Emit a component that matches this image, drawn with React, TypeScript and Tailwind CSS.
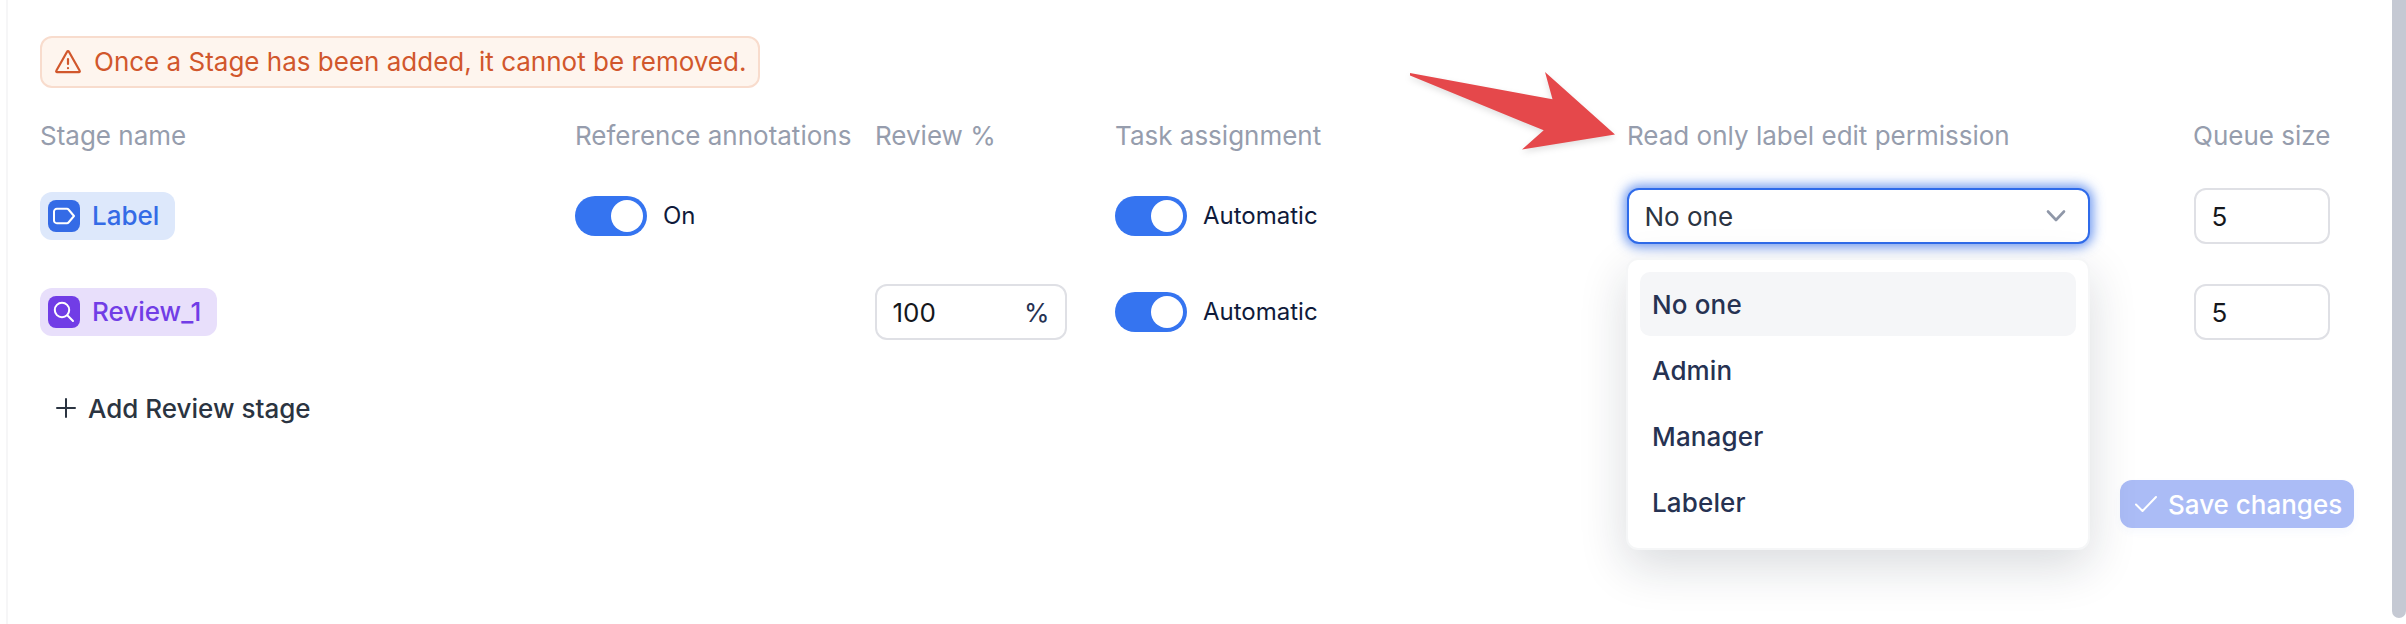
import React from "react";

const input =
  "flex h-14 items-center rounded-xl border-2 border-[#dfe0e5] bg-white px-[15.5px] text-[26px] text-[#15171c]";

function Toggle({ label }: { label: string }) {
  return (
    <div className="flex items-center">
      <span className="flex h-10 w-[72px] items-center justify-end rounded-full bg-[#3574f0] p-1">
        <span className="size-8 rounded-full bg-white" />
      </span>
      <span className="ml-4 text-2xl text-[#0f1a3a]">{label}</span>
    </div>
  );
}

function WarningIcon() {
  return (
    <svg width="28" height="26" viewBox="0 0 28 26" fill="none" stroke="#d1572c" strokeWidth="2.200" strokeLinecap="round" strokeLinejoin="round">
      <path d="M13.200 2.500 2.300 21.800a.9.9 0 0 0 .8 1.400h21.800a.9.9 0 0 0 .8-1.400L14.800 2.500a.9.9 0 0 0-1.600 0Z" />
      <path d="M14 10v5M14 19v.2" />
    </svg>
  );
}

function LabelIcon() {
  return (
    <svg width="32" height="32" viewBox="0 0 32 32" fill="none" stroke="#fff" strokeWidth="2" strokeLinejoin="round">
      <path d="M8.800 8.800h10.200a2 2 0 0 1 1.500.7l5.500 6.500-5.500 6.500a2 2 0 0 1-1.500.7H8.800a2.800 2.800 0 0 1-2.800-2.800v-8.800a2.800 2.800 0 0 1 2.800-2.800Z" />
    </svg>
  );
}

function SearchIcon() {
  return (
    <svg width="32" height="32" viewBox="0 0 32 32" fill="none" stroke="#fff" strokeWidth="2" strokeLinecap="round">
      <circle cx="14" cy="14" r="7.2" />
      <path d="m19.300 19.300 5.700 5.700" />
    </svg>
  );
}

const options = ["No one", "Admin", "Manager", "Labeler"];

export default function App() {
  return (
    <div className="flex h-[624px] w-[2406px] overflow-hidden bg-white font-['Inter',sans-serif] text-[26px] leading-8">
      <div className="ml-1.5 w-0.5 shrink-0 bg-[#f6f6f7]" />
      <main className="w-[2384px] shrink-0 pl-8 pt-9">
        <div className="flex h-[52px] w-[720px] items-center rounded-xl border-2 border-[#f8dccd] bg-[#fef5ee] pl-3 text-[#d1572c]">
          <WarningIcon />
          <span className="ml-3 whitespace-nowrap">Once a Stage has been added, it cannot be removed.</span>
        </div>

        <div className="mt-8 grid h-8 grid-cols-[535px_300px_240px_512px_566px_auto] whitespace-nowrap text-[#969dad]">
          <span>Stage name</span>
          <span>Reference annotations</span>
          <span>Review %</span>
          <span>Task assignment</span>
          <span>Read only label edit permission</span>
          <span>Queue size</span>
        </div>

        <div className="mt-9 grid h-14 grid-cols-[535px_300px_240px_512px_567px_auto] items-center">
          <div>
            <span className="flex h-12 w-[135px] items-center rounded-xl bg-[#dde8fb] pl-2 font-medium text-[#346be6]">
              <span className="rounded-lg bg-[#346be6]"><LabelIcon /></span>
              <span className="ml-3">Label</span>
            </span>
          </div>
          <Toggle label="On" />
          <span />
          <Toggle label="Automatic" />
          <div className="relative w-[463px]">
            <div className="flex h-14 items-center justify-between rounded-xl border-2 border-[#2f6bea] bg-white pl-[15.5px] pr-[21px] text-[#2b3441] shadow-[0_0_12px_3px_rgba(47,107,234,0.7)]">
              <span className="pt-0.5">No one</span>
              <svg width="22" height="14" viewBox="0 0 22 14" fill="none" stroke="#8f97a8" strokeWidth="2.600" strokeLinecap="round" strokeLinejoin="round">
                <path d="m3 2.500 8 8.500 8-8.500" />
              </svg>
            </div>
            <div className="absolute -left-px top-[70px] z-10 h-[292px] w-[464px] rounded-xl border-2 border-[#f5f6f7] bg-white bg-clip-padding p-3 shadow-[0_16px_48px_rgba(20,28,50,0.16)]">
              {options.map((o, i) => (
                <div
                  key={o}
                  className={
                    i === 0
                      ? "mb-0.5 flex h-16 items-center rounded-[10px] bg-[#f5f6f8] pl-3 pt-0.5 font-medium tracking-[0.15px] text-[#263252]"
                      : "mb-0.5 flex h-16 items-center rounded-[10px] pl-3 pt-0.5 font-medium tracking-[0.15px] text-[#263252]"
                  }
                >
                  {o}
                </div>
              ))}
            </div>
          </div>
          <div className={input + " w-[136px] pt-0.5"}>5</div>
        </div>

        <div className="mt-10 grid h-14 grid-cols-[535px_300px_240px_512px_567px_auto] items-center">
          <div>
            <span className="flex h-12 w-[177px] items-center rounded-xl bg-[#e8dffb] pl-2 font-medium text-[#713de6]">
              <span className="rounded-lg bg-[#713de6]"><SearchIcon /></span>
              <span className="ml-3">Review_1</span>
            </span>
          </div>
          <span />
          <div className={input + " w-[192px] justify-between pt-0.5"}>
            <span>100</span>
            <span className="text-[#263252]">%</span>
          </div>
          <Toggle label="Automatic" />
          <span />
          <div className={input + " w-[136px] pt-0.5"}>5</div>
        </div>

        <div className="mt-[52px] flex h-8 items-center pl-4 font-medium text-[#2b3441]">
          <svg width="20" height="20" viewBox="0 0 20 20" fill="none" stroke="currentColor" strokeWidth="2" strokeLinecap="round">
            <path d="M10 1v18M1 10h18" />
          </svg>
          <span className="ml-3 pt-0.5">Add Review stage</span>
        </div>

        <div className="mt-14 flex justify-end pr-[38px]">
          <button className="flex h-12 w-[234px] items-center whitespace-nowrap rounded-xl bg-[#abbcf6] pl-3.5 font-medium text-white shadow-[0_4px_8px_rgba(50,90,220,0.04)]">
            <svg width="24" height="18" viewBox="0 0 24 18" fill="none" stroke="currentColor" strokeWidth="2" strokeLinecap="round" strokeLinejoin="round">
              <path d="m2 9.500 6.500 6.500L22 2" />
            </svg>
            <span className="ml-2.5 pt-0.5">Save changes</span>
          </button>
        </div>
      </main>
      <div className="h-[618px] w-3.5 shrink-0 rounded-b-full bg-[#c5c9d3]" />

      <svg className="absolute left-[1400px] top-[60px] drop-shadow-[0_3px_3px_rgba(0,0,0,0.12)]" width="240" height="100" viewBox="0 0 240 100">
        <path fill="#e5484b" d="M10 13 152.500 39.300 145 12 215 74.500 122 89.500 143.700 70.300 10 15.500Z" />
      </svg>
    </div>
  );
}
